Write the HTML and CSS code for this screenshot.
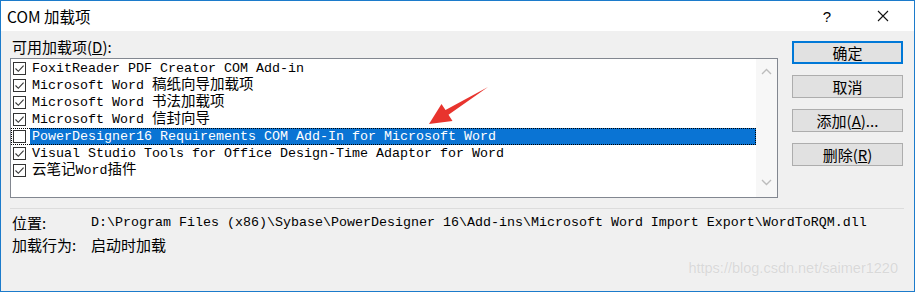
FILE: index.html
```html
<!DOCTYPE html>
<html lang="zh-CN">

<head>
    <meta charset="UTF-8">
    <meta name="viewport" content="width=device-width, initial-scale=1.0">
    <title>COM 加载项</title>
    <link rel="stylesheet" href="styles.css">
</head>

<body>
    <div class="window">
        <div class="titlebar">
            <span class="title">COM 加载项</span>
            <span class="title-btn help">?</span>
            <span class="title-btn close">
                <svg width="12" height="12" viewBox="0 0 12 12"><path d="M1 1 L11 11 M11 1 L1 11" stroke="#111" stroke-width="1.1" fill="none"/></svg>
            </span>
        </div>

        <div class="content">
            <div class="main">
                <div class="list-label">可用加载项(<u>D</u>):</div>
                <div class="listbox">
                    <ul class="items">
                        <li class="item"><span class="check on"></span><span class="text">FoxitReader PDF Creator COM Add-in</span></li>
                        <li class="item"><span class="check on"></span><span class="text">Microsoft Word <span class="zh">稿纸向导加载项</span></span></li>
                        <li class="item"><span class="check on"></span><span class="text">Microsoft Word <span class="zh">书法加载项</span></span></li>
                        <li class="item"><span class="check on"></span><span class="text">Microsoft Word <span class="zh">信封向导</span></span></li>
                        <li class="item selected"><span class="check"></span><span class="text">PowerDesigner16 Requirements COM Add-In for Microsoft Word</span></li>
                        <li class="item"><span class="check on"></span><span class="text">Visual Studio Tools for Office Design-Time Adaptor for Word</span></li>
                        <li class="item"><span class="check on"></span><span class="text"><span class="zh">云笔记</span>Word<span class="zh">插件</span></span></li>
                    </ul>
                    <div class="scrollbar">
                        <svg width="11" height="7" viewBox="0 0 11 7"><path d="M1 6 L5.5 1.5 L10 6" stroke="#bcbcbc" stroke-width="1.4" fill="none"/></svg>
                        <svg width="11" height="7" viewBox="0 0 11 7"><path d="M1 1 L5.5 5.5 L10 1" stroke="#bcbcbc" stroke-width="1.4" fill="none"/></svg>
                    </div>
                </div>
            </div>

            <div class="buttons">
                <button class="btn default">确定</button>
                <button class="btn">取消</button>
                <button class="btn">添加(<u>A</u>)...</button>
                <button class="btn">删除(<u>R</u>)</button>
            </div>
        </div>

        <div class="separator"></div>

        <div class="info">
            <div class="info-row">
                <span class="info-key">位置:</span>
                <span class="info-val mono">D:\Program Files (x86)\Sybase\PowerDesigner 16\Add-ins\Microsoft Word Import Export\WordToRQM.dll</span>
            </div>
            <div class="info-row">
                <span class="info-key">加载行为:</span>
                <span class="info-val">启动时加载</span>
            </div>
        </div>

        <div class="watermark">https://blog.csdn.net/saimer1220</div>
    </div>

    <!-- annotation arrow drawn over the dialog -->
    <svg class="annotation" width="915" height="292" viewBox="0 0 915 292">
        <polygon points="488,87 448.5,114.8 452.5,121 429,124 441.5,104 445.5,110" fill="#e8342e"/>
    </svg>
</body>

</html>
```

FILE: styles.css
```css
body, html {
    margin: 0;
    padding: 0;
    background-color: #f0f0f0;
    font-family: "Noto Sans CJK SC", "Noto Sans", sans-serif;
    color: #000;
    overflow: hidden;
}

.window {
    position: relative;
    width: 915px;
    height: 292px;
    box-sizing: border-box;
    border: 1px solid #1c7bcb; /* bordure bleue de la fenêtre */
    background-color: #f0f0f0;
}

.titlebar {
    display: flex;
    align-items: center;
    height: 30px;
    background-color: #fff;
}

.title {
    padding-left: 6px;
    font-size: 15.5px;
    flex: 1;
}

.title-btn {
    display: flex;
    align-items: center;
    justify-content: center;
    width: 46px;
    height: 30px;
}

.help {
    font-family: "Liberation Sans", sans-serif;
    font-size: 15px;
    margin-right: 10px;
}

.close {
    margin-right: 8px;
}

.content {
    display: flex;
    padding: 7px 10px 0 9px;
}

.main {
    width: 768px;
}

.list-label {
    height: 20px;
    line-height: 18px;
    padding-left: 2px;
    font-size: 15px;
}

.listbox {
    display: flex;
    height: 140px;
    box-sizing: border-box;
    border: 1px solid #828790;
    background-color: #fff;
}

.items {
    list-style: none;
    margin: 0;
    padding: 1px 0 0 0;
    width: 745px;
}

.item {
    display: flex;
    align-items: center;
    height: 17px;
    font-family: "Liberation Mono", "Noto Sans CJK SC", monospace;
    font-size: 13.33px;
    white-space: pre;
}

.check {
    width: 13px;
    height: 13px;
    box-sizing: border-box;
    margin-left: 2px;
    border: 1px solid #333;
    background-color: #fff;
}

.check.on {
    background-image: url("data:image/svg+xml,%3Csvg xmlns='http://www.w3.org/2000/svg' width='11' height='11'%3E%3Cpath d='M1.5 5.5 L4.3 8.3 L9.6 2.6' stroke='%23333' stroke-width='1.1' fill='none'/%3E%3C/svg%3E");
    background-repeat: no-repeat;
}

.text {
    flex: 1;
    height: 17px;
    line-height: 17px;
    margin-left: 4px;
    padding-left: 2px;
    overflow: hidden;
}

.zh {
    font-family: "Noto Sans CJK SC", sans-serif;
    font-size: 14.5px;
    line-height: 12px;
}

.item.selected {
    outline: 1px dotted #000;
    outline-offset: -1px;
}

.item.selected .text {
    background-color: #0a74d4;
    color: #fff;
}

.scrollbar {
    flex: 1;
    display: flex;
    flex-direction: column;
    align-items: center;
    justify-content: space-between;
    padding: 9px 0 11px 0;
    background-color: #f7f7f7;
}

.buttons {
    display: flex;
    flex-direction: column;
    gap: 11px;
    width: 111px;
    margin-left: 14px;
    padding-top: 3px;
}

.btn {
    height: 23px;
    padding: 0;
    border: 1px solid #adadad;
    background-color: #e1e1e1;
    font-family: "Noto Sans CJK SC", sans-serif;
    font-size: 15px;
    line-height: 20px;
    color: #000;
}

.btn.default {
    border: 2px solid #0078d7;
}

.separator {
    margin: 10px 10px 0 9px;
    border-top: 1px solid #dcdcdc;
}

.info {
    padding-top: 2px;
}

.info-row {
    display: flex;
    align-items: center;
    height: 22px;
    font-size: 15px;
}

.info-key {
    width: 79px;
    padding-left: 11px;
}

.info-val.mono {
    font-family: "Liberation Mono", monospace;
    font-size: 13.33px;
}

.watermark {
    margin-top: 5px;
    padding-right: 16px;
    text-align: right;
    font-family: "Liberation Sans", sans-serif;
    font-size: 14.5px;
    color: #d9d9d9;
    text-shadow: 0 0 1px #fafafa;
}

.annotation {
    position: absolute;
    top: 0;
    left: 0;
    pointer-events: none;
}
```
